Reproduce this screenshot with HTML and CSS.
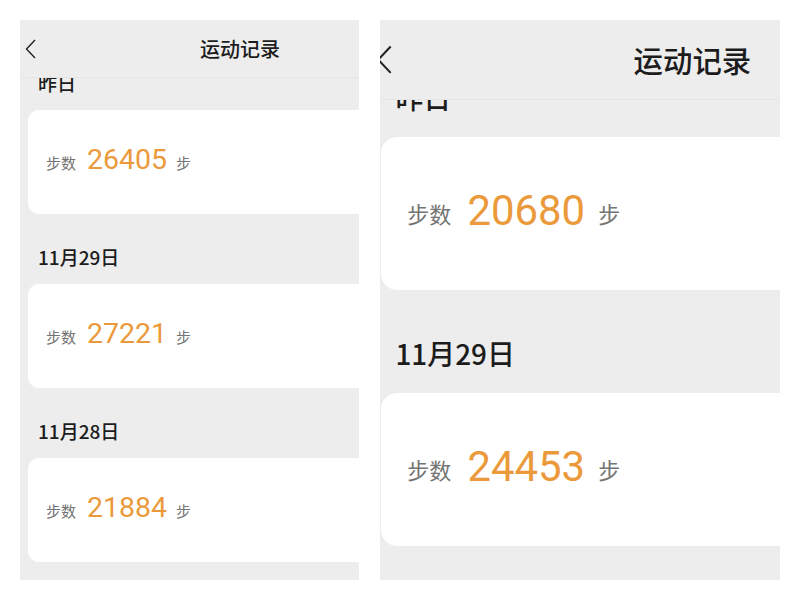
FILE: index.html
```html
<!DOCTYPE html>
<html lang="zh-CN">
<head>
    <meta charset="UTF-8">
    <meta name="viewport" content="width=device-width, initial-scale=1.0">
    <title>运动记录</title>
    <link rel="stylesheet" href="styles.css">
</head>
<body>
    <div class="page">
        <!-- small capture -->
        <div class="frame">
            <div class="screen">
                <header class="topbar">
                    <span class="back">
                        <svg viewBox="0 0 11 20" fill="none"><polyline points="10,1 1.5,10 10,19" /></svg>
                    </span>
                    <h1 class="title">运动记录</h1>
                    <span></span>
                </header>
                <div class="list">
                    <div class="list-inner">
                        <section class="day">
                            <div class="day-label">昨日</div>
                            <div class="card"><span class="unit">步数</span><span class="steps">26405</span><span class="unit">步</span></div>
                        </section>
                        <section class="day">
                            <div class="day-label">11月29日</div>
                            <div class="card"><span class="unit">步数</span><span class="steps">27221</span><span class="unit">步</span></div>
                        </section>
                        <section class="day">
                            <div class="day-label">11月28日</div>
                            <div class="card"><span class="unit">步数</span><span class="steps">21884</span><span class="unit">步</span></div>
                        </section>
                    </div>
                </div>
            </div>
        </div>

        <!-- zoomed capture -->
        <div class="frame frame-large">
            <div class="screen">
                <header class="topbar">
                    <span class="back">
                        <svg viewBox="0 0 11 20" fill="none"><polyline points="10,1 1.5,10 10,19" /></svg>
                    </span>
                    <h1 class="title">运动记录</h1>
                    <span></span>
                </header>
                <div class="list">
                    <div class="list-inner">
                        <section class="day">
                            <div class="day-label">昨日</div>
                            <div class="card"><span class="unit">步数</span><span class="steps">20680</span><span class="unit">步</span></div>
                        </section>
                        <section class="day">
                            <div class="day-label">11月29日</div>
                            <div class="card"><span class="unit">步数</span><span class="steps">24453</span><span class="unit">步</span></div>
                        </section>
                    </div>
                </div>
            </div>
        </div>
    </div>
</body>
</html>
```

FILE: styles.css
```css
body {
    margin: 0;
    background: #ffffff;
    font-family: "Noto Sans CJK SC", "Noto Sans", sans-serif;
    color: #1c1c1c;
}
.page {
    display: flex;
    gap: 21px;
    padding: 20px;
}
.frame {
    --s: 1;
    --bar: 58px;
    --scroll: -38px;
    width: 339px;
    height: 560px;
    overflow: hidden;
    background: #ededed;
}
.frame-large {
    --s: 1.47;
    --bar: 80px;
    --scroll: -66px;
    width: 400px;
}
.screen {
    width: calc(440px * var(--s));
    height: 100%;
    display: flex;
    flex-direction: column;
}
.frame-large .screen {
    margin-left: -11px;
}
.topbar {
    height: var(--bar);
    flex-shrink: 0;
    box-sizing: border-box;
    display: grid;
    grid-template-columns: 1fr auto 1fr;
    align-items: center;
    border-bottom: 1px solid #e6e6e6;
    background: #ededed;
}
.back {
    padding-left: calc(5px * var(--s));
    display: flex;
}
.back svg {
    width: calc(11px * var(--s));
    height: calc(20px * var(--s));
    stroke: #222;
    stroke-width: 1.4;
}
.title {
    margin: 0;
    font-size: calc(20px * var(--s));
    font-weight: 500;
    line-height: 1;
}
.list {
    flex: 1;
    overflow: hidden;
}
.list-inner {
    margin-top: var(--scroll);
    padding-left: calc(8px * var(--s));
}
.day-label {
    font-size: calc(19px * var(--s));
    font-weight: 500;
    line-height: calc(26px * var(--s));
    padding: calc(30px * var(--s)) 0 calc(14px * var(--s)) calc(10px * var(--s));
}
.card {
    height: calc(104px * var(--s));
    background: #ffffff;
    border-radius: calc(11px * var(--s));
    display: flex;
    align-items: center;
    gap: calc(9px * var(--s));
    padding-left: calc(18px * var(--s));
}
.unit {
    font-size: calc(15px * var(--s));
    color: #747474;
}
.steps {
    font-family: Roboto, "Noto Sans", sans-serif;
    font-size: calc(28.5px * var(--s));
    color: #eb9a3b;
    line-height: 1;
    margin-left: calc(2px * var(--s));
    padding-bottom: calc(3px * var(--s));
}
```
